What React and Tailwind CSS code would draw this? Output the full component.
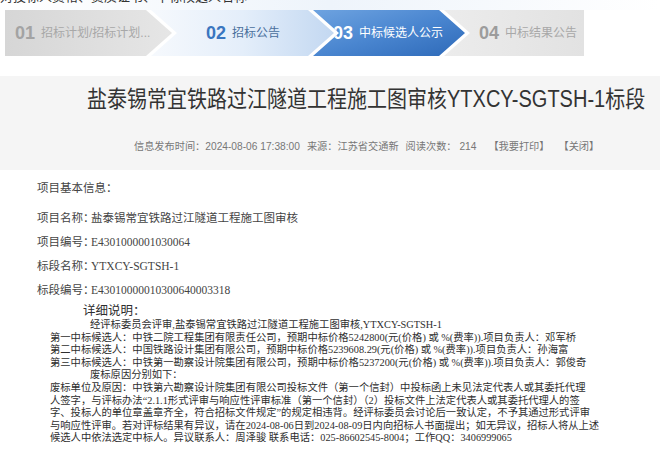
const steps = [
  {
    num: '01',
    label: '招标计划/招标计划...',
    w: 'w-[167px]',
    pl: 'pl-[10px]',
    bg: 'bg-gradient-to-r from-[#d6d6d6] to-[#e6e6e6]',
    clip: '[clip-path:polygon(0_0,calc(100%-26px)_0,100%_50%,calc(100%-26px)_100%,0_100%)]',
    numCls: 'text-[#a3a3a3]',
    txtCls: 'text-[#a8a8a8]',
  },
  {
    num: '02',
    label: '招标公告',
    w: 'w-[183px]',
    pl: 'pl-[55px]',
    bg: 'bg-gradient-to-r from-[#f6f9fd] via-[#e4eefa] to-[#c3d8f1]',
    clip: '[clip-path:polygon(0_0,calc(100%-26px)_0,100%_50%,calc(100%-26px)_100%,0_100%,26px_50%)]',
    numCls: 'text-[#3a76c0]',
    txtCls: 'text-[#4a6f9c]',
  },
  {
    num: '03',
    label: '中标候选人公示',
    w: 'w-[152px]',
    pl: 'pl-[20px]',
    bg: 'bg-gradient-to-br from-[#6ea3e0] via-[#4a86d0] to-[#2d69b8]',
    clip: '[clip-path:polygon(0_0,calc(100%-26px)_0,100%_50%,calc(100%-26px)_100%,0_100%,26px_50%)]',
    numCls: 'text-white',
    txtCls: 'text-white',
  },
  {
    num: '04',
    label: '中标结果公告',
    w: 'w-[140px]',
    pl: 'pl-[35px]',
    bg: 'bg-gradient-to-r from-[#ececec] to-[#e2e2e2]',
    clip: '[clip-path:polygon(0_0,100%_0,100%_100%,0_100%,26px_50%)]',
    numCls: 'text-[#9c9c9c]',
    txtCls: 'text-[#a8a8a8]',
  },
];

const info = [
  ['项目名称：', '盐泰锡常宜铁路过江隧道工程施工图审核'],
  ['项目编号：', 'E4301000001030064'],
  ['标段名称：', 'YTXCY-SGTSH-1'],
  ['标段编号：', 'E43010000010300640003318'],
];

const detail = [
  { x: 'pl-[90px]', t: '经评标委员会评审,盐泰锡常宜铁路过江隧道工程施工图审核,YTXCY-SGTSH-1' },
  { x: 'pl-[50px]', t: '第一中标候选人：中铁二院工程集团有限责任公司，预期中标价格5242800(元(价格) 或 %(费率)).项目负责人：邓军桥' },
  { x: 'pl-[50px]', t: '第二中标候选人：中国铁路设计集团有限公司，预期中标价格5239608.29(元(价格) 或 %(费率)).项目负责人：孙海富' },
  { x: 'pl-[50px]', t: '第三中标候选人：中铁第一勘察设计院集团有限公司，预期中标价格5237200(元(价格) 或 %(费率)).项目负责人：郭俊奇' },
  { x: 'pl-[90px]', t: '废标原因分别如下：' },
  { x: 'pl-[50px]', t: '废标单位及原因：中铁第六勘察设计院集团有限公司投标文件（第一个信封）中投标函上未见法定代表人或其委托代理' },
  { x: 'pl-[50px]', t: '人签字，与评标办法“2.1.1形式评审与响应性评审标准（第一个信封）（2）投标文件上法定代表人或其委托代理人的签' },
  { x: 'pl-[50px]', t: '字、投标人的单位章盖章齐全，符合招标文件规定”的规定相违背。经评标委员会讨论后一致认定，不予其通过形式评审' },
  { x: 'pl-[50px]', t: '与响应性评审。若对评标结果有异议，请在2024-08-06日到2024-08-09日内向招标人书面提出；如无异议，招标人将从上述' },
  { x: 'pl-[50px]', t: '候选人中依法选定中标人。异议联系人：周泽骏  联系电话：025-86602545-8004；工作QQ：3406999065' },
];

export default function App() {
  return (
    <div className="w-[660px] h-[451px] overflow-hidden bg-white font-['Liberation_Sans','Noto_Sans_CJK_SC',sans-serif]">
      {/* cut-off line on top */}
      <div className="h-[10px] overflow-hidden relative bg-gradient-to-r from-white via-[#eef4fb] to-white">
        <div className="absolute left-0 top-[-12px] text-[13px] leading-[18px] text-[#333] whitespace-nowrap">
          对投标人资格、资质证书、中标候选人名称
        </div>
      </div>

      {/* step bar */}
      <div className="flex h-[46px] ml-[5px]">
        {steps.map((s, i) => (
          <div
            key={s.num}
            className={`${s.w} ${s.pl} ${s.bg} ${s.clip} ${i > 0 ? '-ml-[21px]' : ''} flex items-center shrink-0 whitespace-nowrap`}
          >
            <span className={`text-[18px] font-bold ${s.numCls}`}>{s.num}</span>
            <span className={`ml-[6px] text-[12px] ${s.txtCls}`}>{s.label}</span>
          </div>
        ))}
      </div>

      <div className="h-[20px]"></div>

      {/* title panel */}
      <div className="bg-[#f5f5f5] h-[94px] pt-[8px]">
        <h1 className="pl-[87px] text-[20px] leading-[30px] text-[#333] whitespace-nowrap scale-y-[1.15] origin-left">
          盐泰锡常宜铁路过江隧道工程施工图审核YTXCY-SGTSH-1标段
        </h1>
        <div className="pl-[134px] mt-[25px] text-[10.2px] text-[#777] whitespace-nowrap flex">
          <span>信息发布时间：2024-08-06 17:38:00</span>
          <span className="ml-[7px]">来源：江苏省交通新</span>
          <span className="ml-[7px]">阅读次数： 214</span>
          <span className="ml-[12px]">【我要打印】</span>
          <span className="ml-[9px]">【关闭】</span>
        </div>
      </div>

      {/* content */}
      <div className="font-['Liberation_Serif','Noto_Sans_CJK_SC',serif] text-[#2e2e2e]">
        <div className="pl-[37px] pt-[6px] text-[11.5px] leading-[24px] text-[#444]">
          <div className="mb-[6px]">项目基本信息：</div>
          {info.map(([k, v]) => (
            <div key={k} className="flex whitespace-nowrap">
              <span className="w-[54px]">{k}</span>
              <span>{v}</span>
            </div>
          ))}
        </div>

        <div className="pl-[83px] mt-[1px] text-[12.5px] leading-[16px]">详细说明：</div>
        <div className="text-[10.3px] leading-[12.6px] whitespace-nowrap">
          {detail.map((d, i) => (
            <div key={i} className={d.x}>{d.t}</div>
          ))}
        </div>
      </div>
    </div>
  );
}
